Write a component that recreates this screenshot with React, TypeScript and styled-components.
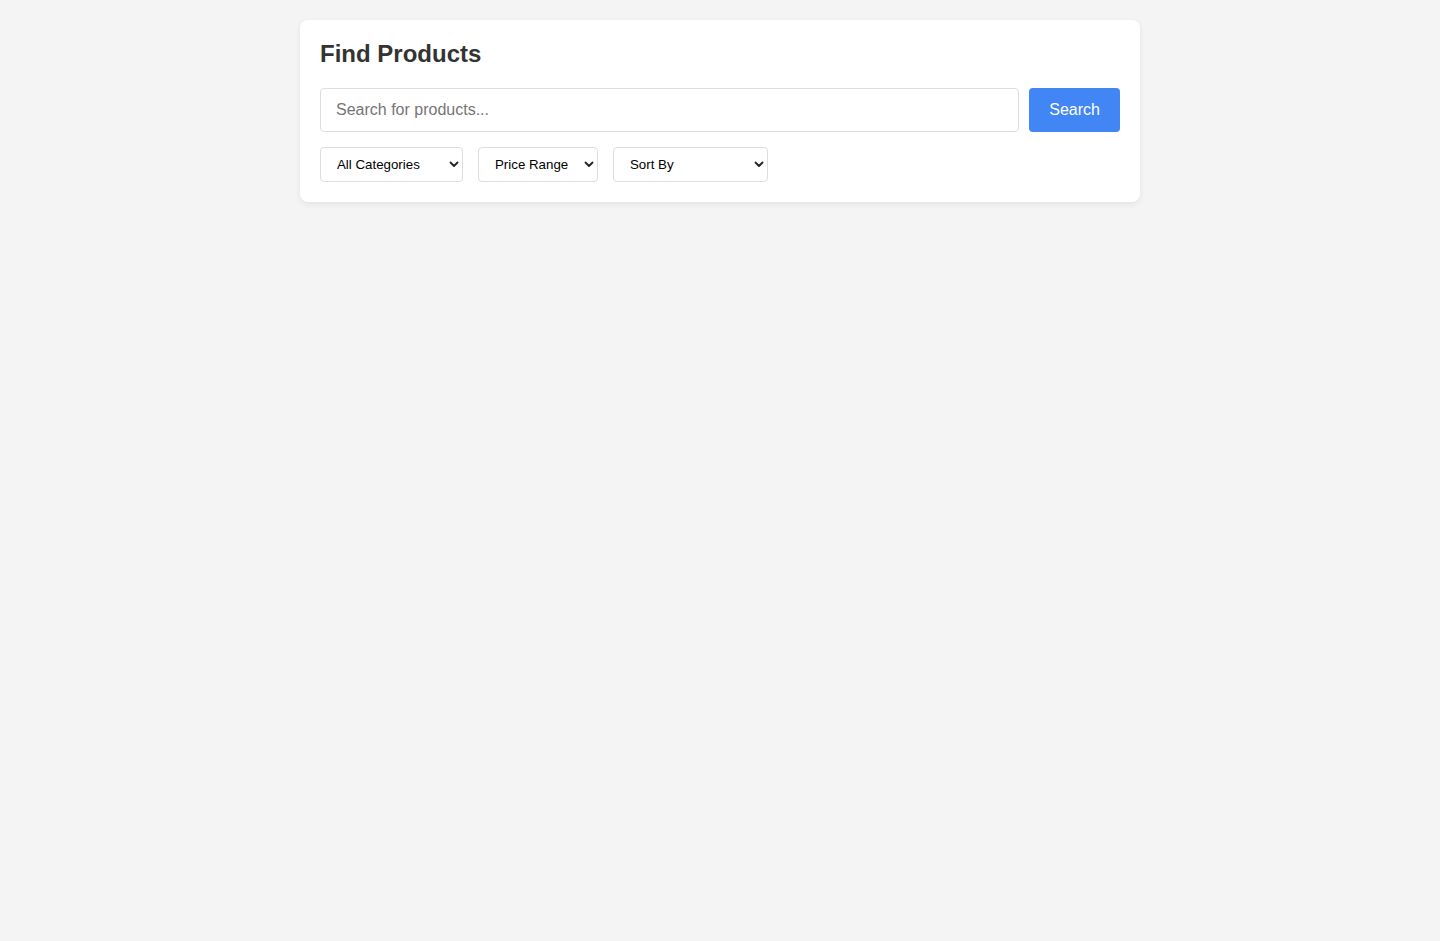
import React from "react";
import styled, { createGlobalStyle } from "styled-components";

const GlobalStyle = createGlobalStyle`
  body {
    margin: 0;
    background: #f4f4f4;
    font-family: "Liberation Sans", Arial, sans-serif;
  }
`;

const Card = styled.div`
  max-width: 800px;
  margin: 20px auto;
  padding: 20px;
  background: #fff;
  border-radius: 8px;
  box-shadow: 0 2px 6px rgba(0, 0, 0, 0.08);
`;

const Title = styled.h2`
  margin: 0 0 20px;
  font-size: 24px;
  line-height: 28px;
  font-weight: 700;
  color: #333;
`;

const SearchRow = styled.div`
  display: flex;
  gap: 10px;
`;

const SearchInput = styled.input`
  flex: 1;
  height: 44px;
  box-sizing: border-box;
  padding: 0 15px;
  font-family: inherit;
  font-size: 16px;
  color: #333;
  border: 1px solid #ddd;
  border-radius: 4px;
  outline: none;
  &::placeholder {
    color: #757575;
  }
`;

const SearchButton = styled.button`
  height: 44px;
  padding: 0 20px;
  border: none;
  border-radius: 4px;
  background: #4285f4;
  color: #fff;
  font-family: inherit;
  font-size: 16px;
  cursor: pointer;
`;

const FilterRow = styled.div`
  display: flex;
  gap: 15px;
  margin-top: 15px;
`;

const SelectWrap = styled.div<{ $w: number }>`
  position: relative;
  width: ${(p) => p.$w}px;
`;

const Select = styled.select`
  appearance: none;
  width: 100%;
  height: 35px;
  box-sizing: border-box;
  padding: 0 24px 0 16px;
  font-family: inherit;
  font-size: 13.3px;
  color: #000;
  background: #fff;
  border: 1px solid #ddd;
  border-radius: 4px;
  outline: none;
`;

const Chevron = styled.svg`
  position: absolute;
  right: 4px;
  top: 14px;
  width: 10px;
  height: 7px;
  pointer-events: none;
`;

function Dropdown({ width, options }: { width: number; options: string[] }) {
  return (
    <SelectWrap $w={width}>
      <Select>
        {options.map((o) => (
          <option key={o}>{o}</option>
        ))}
      </Select>
      <Chevron viewBox="0 0 10 7">
        <path d="M1.5 1.5 L5 5 L8.5 1.5" fill="none" stroke="#222" strokeWidth="1.8" strokeLinecap="round" strokeLinejoin="round" />
      </Chevron>
    </SelectWrap>
  );
}

export default function App() {
  return (
    <>
      <GlobalStyle />
      <Card>
        <Title>Find Products</Title>
        <SearchRow>
          <SearchInput placeholder="Search for products..." />
          <SearchButton>Search</SearchButton>
        </SearchRow>
        <FilterRow>
          <Dropdown width={143} options={["All Categories", "Electronics", "Clothing", "Books"]} />
          <Dropdown width={120} options={["Price Range", "$0 - $50", "$50 - $100", "$100+"]} />
          <Dropdown width={155} options={["Sort By", "Price: Low to High", "Price: High to Low", "Newest"]} />
        </FilterRow>
      </Card>
    </>
  );
}
